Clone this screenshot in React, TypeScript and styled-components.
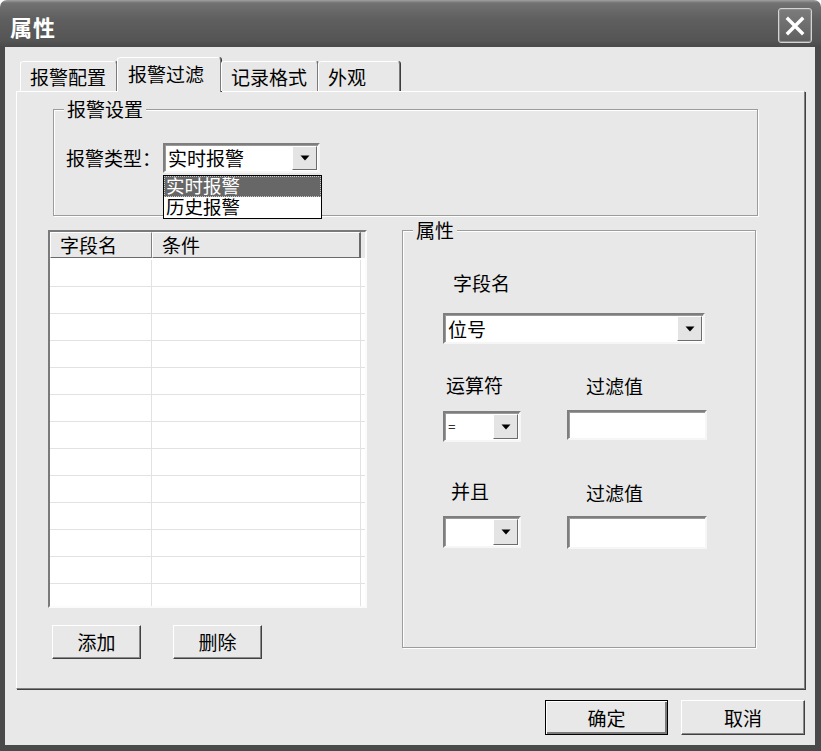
import React from "react";
import styled, { createGlobalStyle, css } from "styled-components";

const FONT = `"Noto Sans CJK SC", "Noto Sans", sans-serif`;
const TIGHT_FONT = `"Liberation Sans", "Noto Sans CJK SC", sans-serif`;
const FACE = "#e8e8e8";

const GlobalStyle = createGlobalStyle`
  * { box-sizing: border-box; }
  html, body { margin: 0; padding: 0; background: #ffffff; }
  body { font-family: ${FONT}; }
  #root { width: 821px; height: 751px; }
`;

const Window = styled.div`
  width: 821px;
  height: 751px;
  display: flex;
  flex-direction: column;
  font-family: ${FONT};
  font-size: 19px;
  color: #000;
`;

const TitleBar = styled.div`
  height: 47px;
  flex: none;
  display: flex;
  align-items: center;
  justify-content: space-between;
  padding: 0 9px 0 10px;
  border-radius: 7px 7px 0 0;
  background: linear-gradient(
    to bottom,
    #a0a0a0 0px,
    #727272 3px,
    #606060 18px,
    #555555 40px,
    #4a4a4a 47px
  );
`;

const Title = styled.span`
  color: #fff;
  font-weight: 700;
  font-size: 22px;
  letter-spacing: 1px;
  line-height: 26px;
  margin-top: 4px;
`;

const CloseButton = styled.div`
  align-self: flex-start;
  margin-top: 8px;
  width: 34px;
  height: 35px;
  border: 1px solid #d4d4d4;
  border-radius: 3px;
  background: linear-gradient(to bottom, #7c7c7c, #5f5f5f);
  box-shadow: inset 0 0 0 1px #8c8c8c;
  display: flex;
  align-items: center;
  justify-content: center;
`;

const Frame = styled.div`
  flex: 1;
  min-height: 0;
  display: flex;
  flex-direction: column;
  background: ${FACE};
  border-style: solid;
  border-color: #4a4a4a;
  border-width: 0 6px 6px 5px;
  padding: 10px 10px 0 11px;
`;

const TabStrip = styled.div`
  height: 34px;
  flex: none;
  display: flex;
  align-items: flex-end;
  padding-left: 4px;
`;

const Tab = styled.div<{ $active?: boolean; $w: number }>`
  width: ${(p) => p.$w}px;
  height: ${(p) => (p.$active ? 35 : 30)}px;
  margin-bottom: ${(p) => (p.$active ? -1 : 0)}px;
  position: relative;
  padding-left: 9px;
  display: flex;
  align-items: center;
  background: ${FACE};
  border-top: 1px solid #fff;
  border-left: 1px solid #fff;
  border-right: 1px solid #7a7a7a;
  box-shadow: 1px 0 0 #3c3c3c;
  border-radius: 3px 3px 0 0;
  line-height: 22px;
  ${(p) =>
    p.$active &&
    css`
      padding-left: 10px;
      padding-bottom: 3px;
    `}
`;

const TabPanel = styled.div`
  height: 598px;
  flex: none;
  border: 1px solid;
  border-color: #fff #808080 #808080 #fff;
  box-shadow: 1px 1px 0 #404040;
  padding: 17px 0 0 31px;
  display: flex;
  flex-direction: column;
`;

const Group = styled.div<{ $w: number; $h: number }>`
  position: relative;
  flex: none;
  width: ${(p) => p.$w}px;
  height: ${(p) => p.$h}px;
  border: 1px solid #9c9c9c;
  box-shadow: inset 1px 1px 0 #fff, 1px 1px 0 #fff;
`;

const Legend = styled.span`
  position: absolute;
  top: -12px;
  left: 10px;
  padding: 0 3px;
  background: ${FACE};
  line-height: 22px;
`;

const AlarmGroup = styled(Group)`
  margin-left: 5px;
  padding: 33px 0 0 12px;
`;

const AlarmRow = styled.div`
  display: flex;
  align-items: center;
`;

const RowLabel = styled.span`
  width: 97px;
  line-height: 22px;
`;

const ComboWrap = styled.div`
  position: relative;
`;

const Combo = styled.div<{ $w: number; $h: number; $mt?: number }>`
  width: ${(p) => p.$w}px;
  height: ${(p) => p.$h}px;
  margin-top: ${(p) => p.$mt ?? 0}px;
  display: flex;
  align-items: stretch;
  justify-content: space-between;
  background: #fff;
  border: 2px solid;
  border-color: #7e7e7e #f6f6f6 #f6f6f6 #7e7e7e;
  box-shadow: inset 1px 1px 0 #9a9a9a;
`;

const ComboText = styled.span<{ $small?: boolean }>`
  display: flex;
  align-items: center;
  padding-left: 3px;
  line-height: 22px;
  ${(p) =>
    p.$small &&
    css`
      font-family: "Liberation Sans", sans-serif;
      font-size: 13px;
      color: #333;
    `}
`;

const DropButton = styled.span`
  width: 25px;
  margin: 1px;
  flex: none;
  display: flex;
  align-items: center;
  justify-content: center;
  background: #e4e4e4;
  border: 1px solid;
  border-color: #fff #6c6c6c #6c6c6c #fff;
`;

const DropList = styled.div`
  position: absolute;
  top: calc(100% + 2px);
  left: 0;
  width: 159px;
  border: 1px solid #000;
  background: #fff;
  z-index: 3;
`;

const DropItem = styled.div<{ $selected?: boolean }>`
  height: 21px;
  line-height: 21px;
  padding-left: 2px;
  font-family: ${TIGHT_FONT};
  font-size: 18.5px;
  ${(p) =>
    p.$selected &&
    css`
      background: #676767;
      color: #fff;
      outline: 1px dotted #c8c8c8;
      outline-offset: -1px;
    `}
`;

const Lower = styled.div`
  display: flex;
  align-items: flex-start;
  gap: 35px;
  margin-top: 14px;
`;

const LeftCol = styled.div`
  display: flex;
  flex-direction: column;
`;

const ListView = styled.div`
  width: 319px;
  height: 378px;
  display: flex;
  flex-direction: column;
  overflow: hidden;
  background: #fff;
  border: 2px solid;
  border-color: #7a7a7a #fbfbfb #fbfbfb #7a7a7a;
`;

const ListHeader = styled.div`
  height: 26px;
  flex: none;
  display: flex;
  background: ${FACE};
`;

const HeaderCell = styled.div<{ $w: number; $last?: boolean }>`
  width: ${(p) => p.$w}px;
  height: 26px;
  padding-left: 9px;
  line-height: 24px;
  border: 1px solid;
  border-color: #fff #808080 #6a6a6a #fff;
  ${(p) =>
    p.$last &&
    css`
      border-right: 2px solid #6a6a6a;
    `}
`;

const ListBody = styled.div`
  padding-top: 2px;
  display: flex;
  flex-direction: column;
`;

const ListRow = styled.div`
  height: 27px;
  flex: none;
  display: flex;
  border-bottom: 1px solid #e2e2e2;
`;

const ListCell = styled.div<{ $w: number }>`
  width: ${(p) => p.$w}px;
  border-right: 1px solid #e2e2e2;
`;

const ButtonRow = styled.div`
  display: flex;
  gap: 32px;
  margin-top: 17px;
  padding-left: 4px;
`;

const Button = styled.div<{ $w: number; $h: number; $default?: boolean }>`
  width: ${(p) => p.$w}px;
  height: ${(p) => p.$h}px;
  display: flex;
  align-items: center;
  justify-content: center;
  background: ${FACE};
  line-height: 22px;
  ${(p) =>
    p.$default
      ? css`
          border: 1px solid #000;
          box-shadow: inset 1px 1px 0 #fff, inset -2px -2px 0 #7a7a7a;
        `
      : css`
          border: 1px solid;
          border-color: #fff #404040 #404040 #fff;
          box-shadow: inset -1px -1px 0 #8a8a8a;
        `}
`;

const PropGroup = styled(Group)`
  padding-left: 40px;
  display: flex;
  flex-direction: column;
`;

const FieldLabel = styled.span<{ $indent?: number; $mt?: number }>`
  display: block;
  margin-left: ${(p) => p.$indent ?? 0}px;
  margin-top: ${(p) => p.$mt ?? 0}px;
  line-height: 22px;
`;

const FieldGrid = styled.div<{ $mt: number; $gap: number }>`
  display: grid;
  grid-template-columns: 124px 140px;
  row-gap: ${(p) => p.$gap}px;
  margin-top: ${(p) => p.$mt}px;
  align-items: start;
`;

const TextBox = styled.div<{ $h: number; $mt?: number }>`
  width: 140px;
  height: ${(p) => p.$h}px;
  margin-top: ${(p) => p.$mt ?? 0}px;
  background: #fff;
  border: 2px solid;
  border-color: #7e7e7e #f6f6f6 #f6f6f6 #7e7e7e;
  box-shadow: inset 1px 1px 0 #9a9a9a;
`;

const Footer = styled.div`
  display: flex;
  justify-content: flex-end;
  gap: 13px;
  padding-top: 11px;
`;

const Arrow = () => (
  <svg width="10" height="6" viewBox="0 0 10 6">
    <path d="M0.5 0.5 H9.5 L5 5.5 Z" fill="#000" />
  </svg>
);

const CloseIcon = () => (
  <svg width="20" height="20" viewBox="0 0 20 20">
    <path
      d="M3 3 L17 17 M17 3 L3 17"
      stroke="#fff"
      strokeWidth="3.4"
      strokeLinecap="square"
    />
  </svg>
);

const ComboBox: React.FC<{
  w: number;
  h: number;
  mt?: number;
  text?: string;
  small?: boolean;
}> = ({ w, h, mt, text, small }) => (
  <Combo $w={w} $h={h} $mt={mt}>
    <ComboText $small={small}>{text}</ComboText>
    <DropButton>
      <Arrow />
    </DropButton>
  </Combo>
);

const rows = Array.from({ length: 13 }, (_, i) => i);

export default function App() {
  return (
    <>
      <GlobalStyle />
      <Window>
        <TitleBar>
          <Title>属性</Title>
          <CloseButton>
            <CloseIcon />
          </CloseButton>
        </TitleBar>
        <Frame>
          <TabStrip>
            <Tab $w={97}>报警配置</Tab>
            <Tab $w={104} $active>
              报警过滤
            </Tab>
            <Tab $w={97}>记录格式</Tab>
            <Tab $w={82}>外观</Tab>
          </TabStrip>
          <TabPanel>
            <AlarmGroup $w={705} $h={107}>
              <Legend>报警设置</Legend>
              <AlarmRow>
                <RowLabel>报警类型：</RowLabel>
                <ComboWrap>
                  <ComboBox w={157} h={30} text="实时报警" />
                  <DropList>
                    <DropItem $selected>实时报警</DropItem>
                    <DropItem>历史报警</DropItem>
                  </DropList>
                </ComboWrap>
              </AlarmRow>
            </AlarmGroup>
            <Lower>
              <LeftCol>
                <ListView>
                  <ListHeader>
                    <HeaderCell $w={102}>字段名</HeaderCell>
                    <HeaderCell $w={209} $last>
                      条件
                    </HeaderCell>
                  </ListHeader>
                  <ListBody>
                    {rows.map((r) => (
                      <ListRow key={r}>
                        <ListCell $w={102} />
                        <ListCell $w={209} />
                      </ListRow>
                    ))}
                  </ListBody>
                </ListView>
                <ButtonRow>
                  <Button $w={89} $h={34}>
                    添加
                  </Button>
                  <Button $w={89} $h={34}>
                    删除
                  </Button>
                </ButtonRow>
              </LeftCol>
              <PropGroup $w={354} $h={418}>
                <Legend>属性</Legend>
                <FieldLabel $indent={10} $mt={41}>
                  字段名
                </FieldLabel>
                <ComboBox w={262} h={31} mt={19} text="位号" />
                <FieldGrid $mt={30} $gap={13}>
                  <FieldLabel $indent={3}>运算符</FieldLabel>
                  <FieldLabel $indent={19} $mt={1}>
                    过滤值
                  </FieldLabel>
                  <ComboBox w={78} h={31} mt={1} text="=" small />
                  <TextBox $h={30} />
                </FieldGrid>
                <FieldGrid $mt={38} $gap={12}>
                  <FieldLabel $indent={8}>并且</FieldLabel>
                  <FieldLabel $indent={19} $mt={2}>
                    过滤值
                  </FieldLabel>
                  <ComboBox w={78} h={32} />
                  <TextBox $h={33} $mt={0} />
                </FieldGrid>
              </PropGroup>
            </Lower>
          </TabPanel>
          <Footer>
            <Button $w={123} $h={35} $default>
              确定
            </Button>
            <Button $w={124} $h={35}>
              取消
            </Button>
          </Footer>
        </Frame>
      </Window>
    </>
  );
}
